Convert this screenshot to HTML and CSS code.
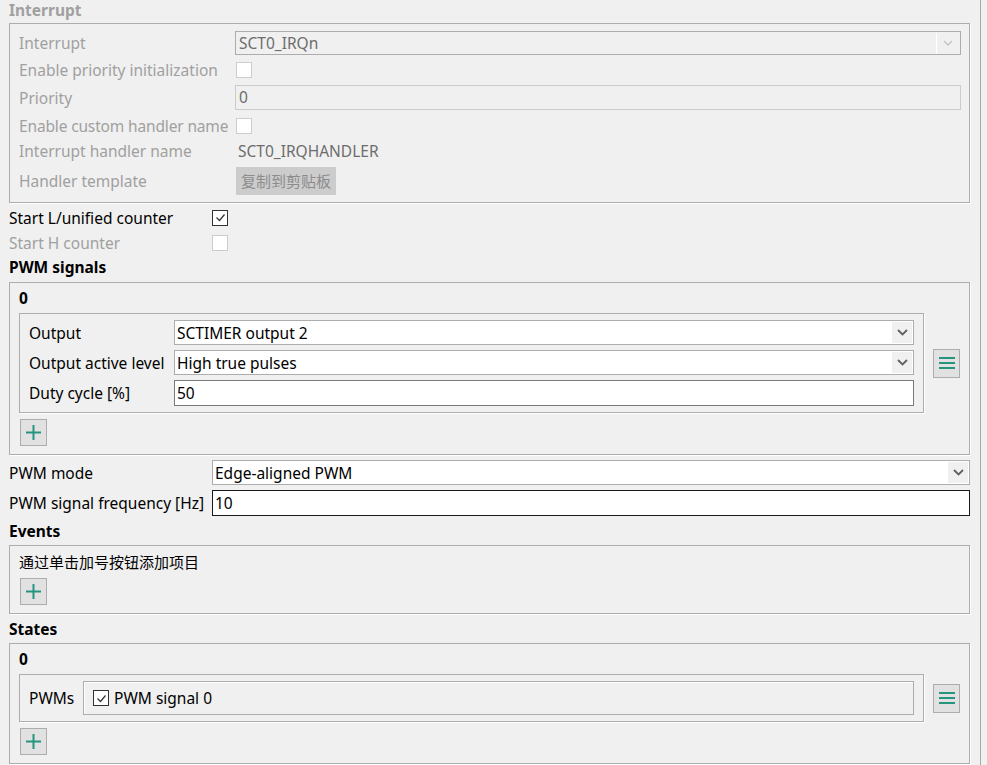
FILE: index.html
```html
<!DOCTYPE html>
<html lang="en">
  <head>
    <meta charset="UTF-8" />
    <meta name="viewport" content="width=device-width, initial-scale=1.0" />
    <title>SCTimer configuration</title>
    <link rel="stylesheet" href="styles.css">
  </head>
  <body>
    <div class="panel">
      <div class="section-title disabled">Interrupt</div>
      <div class="group irq-group">
        <div class="irq-row r1">
          <span class="label disabled">Interrupt</span>
          <div class="combo combo-disabled">
            <span class="combo-text">SCT0_IRQn</span>
            <span class="combo-btn">
              <svg width="10" height="6" viewBox="0 0 10 6"><path d="M1 1l4 4 4-4" fill="none" stroke="#c4c4c4" stroke-width="1.4"/></svg>
            </span>
          </div>
        </div>
        <div class="irq-row r2">
          <span class="label disabled">Enable priority initialization</span>
          <span class="check check-disabled"></span>
        </div>
        <div class="irq-row r3">
          <span class="label disabled">Priority</span>
          <div class="input input-disabled">0</div>
        </div>
        <div class="irq-row r4">
          <span class="label disabled tight">Enable custom handler name</span>
          <span class="check check-disabled"></span>
        </div>
        <div class="irq-row r5">
          <span class="label disabled">Interrupt handler name</span>
          <span class="value-text">SCT0_IRQHANDLER</span>
        </div>
        <div class="irq-row r6">
          <span class="label disabled">Handler template</span>
          <span class="copy-btn">复制到剪贴板</span>
        </div>
      </div>

      <div class="check-row first">
        <span class="label">Start L/unified counter</span>
        <span class="check">
          <svg width="13" height="13" viewBox="0 0 13 13"><path d="M2.5 6.5l3 3 5-6" fill="none" stroke="#333" stroke-width="1.2"/></svg>
        </span>
      </div>
      <div class="check-row">
        <span class="label disabled">Start H counter</span>
        <span class="check check-disabled"></span>
      </div>

      <div class="section-title spaced">PWM signals</div>
      <div class="group">
        <div class="item-index">0</div>
        <div class="item-row">
          <div class="item-box pwm-box">
            <div class="field-row">
              <span class="label">Output</span>
              <div class="combo">
                <span class="combo-text">SCTIMER output 2</span>
                <span class="combo-btn">
                  <svg width="11" height="7" viewBox="0 0 11 7"><path d="M1 1l4.5 4.5 4.5-4.5" fill="none" stroke="#606060" stroke-width="1.8"/></svg>
                </span>
              </div>
            </div>
            <div class="field-row">
              <span class="label">Output active level</span>
              <div class="combo">
                <span class="combo-text">High true pulses</span>
                <span class="combo-btn">
                  <svg width="11" height="7" viewBox="0 0 11 7"><path d="M1 1l4.5 4.5 4.5-4.5" fill="none" stroke="#606060" stroke-width="1.8"/></svg>
                </span>
              </div>
            </div>
            <div class="field-row">
              <span class="label">Duty cycle [%]</span>
              <div class="input input-duty">50</div>
            </div>
          </div>
          <span class="tool-btn menu-btn">
            <svg width="16" height="12" viewBox="0 0 16 12"><path d="M0 1h16M0 6h16M0 11h16" stroke="#26957f" stroke-width="2"/></svg>
          </span>
        </div>
        <span class="tool-btn add-btn">
          <svg width="15" height="15" viewBox="0 0 15 15"><path d="M7.5 0v15M0 7.5h15" stroke="#26957f" stroke-width="2"/></svg>
        </span>
      </div>

      <div class="wide-row mode-row">
        <span class="label">PWM mode</span>
        <div class="combo">
          <span class="combo-text">Edge-aligned PWM</span>
          <span class="combo-btn">
            <svg width="11" height="7" viewBox="0 0 11 7"><path d="M1 1l4.5 4.5 4.5-4.5" fill="none" stroke="#606060" stroke-width="1.8"/></svg>
          </span>
        </div>
      </div>
      <div class="wide-row freq-row">
        <span class="label">PWM signal frequency [Hz]</span>
        <div class="input input-focus">10</div>
      </div>

      <div class="section-title spaced-more">Events</div>
      <div class="group">
        <div class="hint">通过单击加号按钮添加项目</div>
        <span class="tool-btn add-btn first-add">
          <svg width="15" height="15" viewBox="0 0 15 15"><path d="M7.5 0v15M0 7.5h15" stroke="#26957f" stroke-width="2"/></svg>
        </span>
      </div>

      <div class="section-title spaced-more">States</div>
      <div class="group">
        <div class="item-index">0</div>
        <div class="item-row">
          <div class="item-box state-box">
            <span class="label">PWMs</span>
            <div class="check-list">
              <span class="check">
                <svg width="13" height="13" viewBox="0 0 13 13"><path d="M2.5 6.5l3 3 5-6" fill="none" stroke="#333" stroke-width="1.2"/></svg>
              </span>
              <span>PWM signal 0</span>
            </div>
          </div>
          <span class="tool-btn menu-btn">
            <svg width="16" height="12" viewBox="0 0 16 12"><path d="M0 1h16M0 6h16M0 11h16" stroke="#26957f" stroke-width="2"/></svg>
          </span>
        </div>
        <span class="tool-btn add-btn">
          <svg width="15" height="15" viewBox="0 0 15 15"><path d="M7.5 0v15M0 7.5h15" stroke="#26957f" stroke-width="2"/></svg>
        </span>
      </div>
    </div>
  </body>
</html>
```

FILE: styles.css
```css
body {
  margin: 0;
  background: #f0f0f0;
  font-family: "Noto Sans", "Noto Sans CJK SC", sans-serif;
  font-size: 15.5px;
  color: #000;
}

.panel {
  box-sizing: border-box;
  width: 981px;
  height: 765px;
  padding: 0 10px 0 9px;
  border-right: 1px solid #a9a9a9;
  overflow: hidden;
}

.disabled {
  color: #a0a0a0;
}
.tight {
  letter-spacing: -0.15px;
}

.section-title {
  font-weight: bold;
  line-height: 20px;
  height: 20px;
  margin-bottom: 3px;
}
.section-title.spaced {
  margin: 2px 0 5px;
}
.section-title.spaced-more {
  margin: 5px 0 4px;
}

.group {
  border: 1px solid #adadad;
  box-shadow: 1px 1px 0 #fff;
  padding: 0 9px 8px 9px;
}

/* interrupt block */
.irq-group {
  padding: 7px 8px 7px 9px;
}
.irq-row {
  display: flex;
  align-items: center;
}
.irq-row .label {
  width: 216px;
  flex: none;
}
.irq-row.r1 { height: 24px; }
.irq-row.r2 { height: 30px; }
.irq-row.r3 { height: 25px; }
.irq-row.r4 { height: 31px; }
.irq-row.r5 { height: 20px; }
.irq-row.r6 { height: 28px; margin-top: 6px; }

.value-text {
  color: #6d6d6d;
  padding-left: 3px;
}
.copy-btn {
  margin-left: 1px;
  height: 28px;
  line-height: 28px;
  padding: 0 5px;
  font-size: 15px;
  background: #cccccc;
  color: #8c8c8c;
}

/* inputs */
.combo {
  flex: 1;
  height: 25px;
  box-sizing: border-box;
  border: 1px solid #adadad;
  background: #fff;
  display: flex;
  align-items: center;
}
.combo-text {
  flex: 1;
  padding-left: 2px;
}
.combo-btn {
  width: 20px;
  height: 21px;
  margin-right: 1px;
  background: #f0f0f0;
  display: flex;
  align-items: center;
  justify-content: center;
}
.combo-disabled {
  height: 24px;
  background: #f0f0f0;
  color: #6d6d6d;
}
.combo-disabled .combo-text {
  padding-left: 3px;
}
.combo-disabled .combo-btn {
  border-left: 1px solid #fff;
  width: 22px;
}

.input {
  flex: 1;
  box-sizing: border-box;
  height: 26px;
  line-height: 24px;
  padding-left: 2px;
  background: #fff;
  border: 1px solid #7a7a7a;
}
.input-disabled {
  height: 25px;
  line-height: 23px;
  background: #f0f0f0;
  border-color: #cccccc;
  color: #6d6d6d;
  padding-left: 3px;
}
.input-focus {
  border-color: #1a1a1a;
}

.check {
  box-sizing: border-box;
  width: 16px;
  height: 16px;
  border: 1px solid #333;
  background: #fff;
  display: inline-flex;
  align-items: center;
  justify-content: center;
}
.check-disabled {
  border-color: #cccccc;
}
.irq-row .check {
  margin-left: 1px;
}

.check-row {
  display: flex;
  align-items: center;
  height: 25px;
}
.check-row.first {
  margin-top: 2px;
}
.check-row .label {
  width: 203px;
}

/* list items */
.item-index {
  font-weight: bold;
  height: 30px;
  line-height: 30px;
}
.item-row {
  display: flex;
  align-items: center;
  gap: 9px;
}
.item-box {
  flex: 1;
  border: 1px solid #adadad;
  box-shadow: 1px 1px 0 #fff;
  padding: 6px 9px;
}
.pwm-box {
  display: flex;
  flex-direction: column;
  gap: 5px;
}
.field-row {
  display: flex;
  align-items: center;
}
.field-row .label {
  width: 145px;
  flex: none;
}

.state-box {
  display: flex;
  align-items: center;
}
.state-box .label {
  width: 54px;
  flex: none;
}
.check-list {
  flex: 1;
  box-sizing: border-box;
  height: 34px;
  border: 1px solid #adadad;
  box-shadow: inset 1px 1px 0 #fff;
  display: flex;
  align-items: center;
  gap: 5px;
  padding-left: 9px;
}

.tool-btn {
  box-sizing: border-box;
  border: 1px solid #adadad;
  background: #e1e1e1;
  display: flex;
  align-items: center;
  justify-content: center;
}
.menu-btn {
  width: 27px;
  height: 29px;
}
.add-btn {
  width: 27px;
  height: 27px;
  margin: 6px 0 0 1px;
}
.add-btn.first-add {
  margin-top: 0;
}

.hint {
  height: 32px;
  line-height: 32px;
  font-size: 15px;
}

/* standalone rows */
.wide-row {
  display: flex;
  align-items: center;
}
.wide-row .label {
  width: 203px;
  flex: none;
}
.mode-row {
  margin-top: 5px;
}
.freq-row {
  margin-top: 5px;
}
```
